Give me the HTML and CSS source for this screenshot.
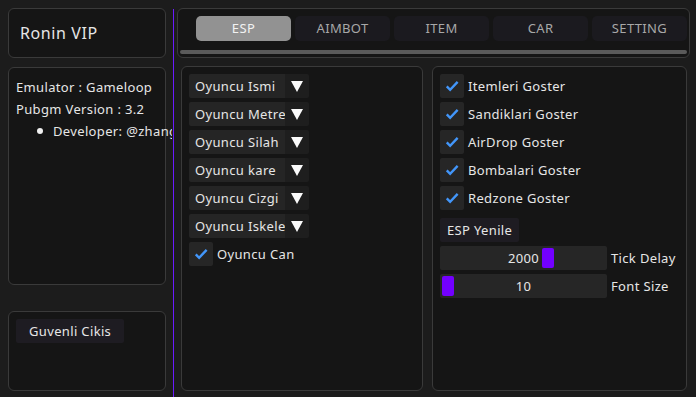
FILE: index.html
```html
<!DOCTYPE html>
<html>
<head>
    <meta charset="UTF-8">
    <title>Ronin VIP</title>
    <link rel="stylesheet" href="styles.css">
</head>
<body>
    <div class="window">
        <!-- Левая колонка -->
        <aside class="sidebar">
            <div class="panel title-panel">Ronin VIP</div>
            <div class="panel info-panel">
                <p>Emulator : Gameloop</p>
                <p>Pubgm Version : 3.2</p>
                <p class="bullet"><span class="dot"></span>Developer: @zhangyuxuan</p>
            </div>
            <div class="panel exit-panel">
                <span class="btn">Guvenli Cikis</span>
            </div>
        </aside>

        <div class="divider"></div>

        <main class="content">
            <div class="panel tabs-panel">
                <div class="tabs">
                    <span class="tab active">ESP</span>
                    <span class="tab">AIMBOT</span>
                    <span class="tab">ITEM</span>
                    <span class="tab">CAR</span>
                    <span class="tab">SETTING</span>
                </div>
                <div class="tab-bar"></div>
            </div>

            <div class="columns">
                <div class="panel col-left">
                    <div class="combo"><span class="combo-label">Oyuncu Ismi</span><span class="combo-arrow"></span></div>
                    <div class="combo"><span class="combo-label">Oyuncu Metre</span><span class="combo-arrow"></span></div>
                    <div class="combo"><span class="combo-label">Oyuncu Silah</span><span class="combo-arrow"></span></div>
                    <div class="combo"><span class="combo-label">Oyuncu kare</span><span class="combo-arrow"></span></div>
                    <div class="combo"><span class="combo-label">Oyuncu Cizgi</span><span class="combo-arrow"></span></div>
                    <div class="combo"><span class="combo-label">Oyuncu Iskelet</span><span class="combo-arrow"></span></div>
                    <label class="check"><span class="box"><svg viewBox="0 0 24 24"><path d="M5 12.5l4.5 4.5L19.5 6.5"/></svg></span>Oyuncu Can</label>
                </div>

                <div class="panel col-right">
                    <label class="check"><span class="box"><svg viewBox="0 0 24 24"><path d="M5 12.5l4.5 4.5L19.5 6.5"/></svg></span>Itemleri Goster</label>
                    <label class="check"><span class="box"><svg viewBox="0 0 24 24"><path d="M5 12.5l4.5 4.5L19.5 6.5"/></svg></span>Sandiklari Goster</label>
                    <label class="check"><span class="box"><svg viewBox="0 0 24 24"><path d="M5 12.5l4.5 4.5L19.5 6.5"/></svg></span>AirDrop Goster</label>
                    <label class="check"><span class="box"><svg viewBox="0 0 24 24"><path d="M5 12.5l4.5 4.5L19.5 6.5"/></svg></span>Bombalari Goster</label>
                    <label class="check"><span class="box"><svg viewBox="0 0 24 24"><path d="M5 12.5l4.5 4.5L19.5 6.5"/></svg></span>Redzone Goster</label>
                    <div class="row-gap"><span class="btn">ESP Yenile</span></div>
                    <div class="slider-row">
                        <div class="slider"><span class="grab" style="left: 102px"></span><span class="value">2000</span></div>
                        <span>Tick Delay</span>
                    </div>
                    <div class="slider-row">
                        <div class="slider"><span class="grab" style="left: 2px"></span><span class="value">10</span></div>
                        <span>Font Size</span>
                    </div>
                </div>
            </div>
        </main>
    </div>
</body>
</html>
```

FILE: styles.css
```css
body {
    margin: 0;
    background-color: #1c1c1c;
    color: #e6e6e6;
    font-family: "Noto Sans", sans-serif;
    font-size: 13px;
    letter-spacing: 0.35px;
    overflow: hidden;
}

.window {
    display: flex;
    height: 397px;
    box-sizing: border-box;
    padding: 8px 6px 6px 8px;
}

.panel { /* Общий стиль панелей */
    background-color: #151515;
    border: 1px solid #3a3a3a;
    border-radius: 6px;
    box-sizing: border-box;
}

.sidebar {
    width: 158px;
    display: flex;
    flex-direction: column;
}

.title-panel {
    height: 50px;
    font-size: 16px;
    letter-spacing: 0.6px;
    padding: 0 0 0 11px;
    display: flex;
    align-items: center;
}

.info-panel {
    height: 219px;
    margin-top: 9px;
    padding: 11px 0 0 7px;
    white-space: nowrap;
}

.info-panel p {
    margin: 0 0 6px;
    line-height: 16px;
}

.bullet { /* Строка с точкой, обрезается у разделителя */
    display: flex;
    align-items: center;
    width: 156px;
    overflow: hidden;
}

.dot {
    flex-shrink: 0;
    width: 6px;
    height: 6px;
    border-radius: 50%;
    background: #f0f0f0;
    margin: 0 10px 0 21px;
}

.exit-panel {
    height: 80px;
    margin-top: 26px;
    padding: 7px 0 0 7px;
}

.btn { /* Кнопки */
    display: inline-block;
    background-color: #1e1c22;
    padding: 0 7px;
    height: 24px;
    line-height: 24px;
    border-radius: 2px;
}

.exit-panel .btn {
    padding: 0 13px;
}

.divider {
    width: 1px;
    background-color: #6a1aff;
    margin: 1px 3px -6px 7px;
}

.content {
    flex: 1;
    display: flex;
    flex-direction: column;
}

.tabs-panel {
    height: 50px;
    padding: 7px 2px 0 2px;
}

.tabs {
    display: flex;
    gap: 4px;
    padding-left: 16px;
}

.tab {
    width: 95px;
    height: 25px;
    line-height: 25px;
    text-align: center;
    background-color: #1b1a1f;
    color: #a8a8a8;
    border-radius: 5px;
}

.tab.active {
    background-color: #929292;
    color: #f2f2f2;
}

.tab-bar {
    height: 4px;
    background-color: #5a5a5a;
    border-radius: 2px;
    margin-top: 9px;
}

.columns {
    flex: 1;
    display: flex;
    gap: 9px;
    margin: 8px 3px 0 4px;
}

.col-left {
    width: 242px;
    padding: 7px 0 0 7px;
}

.col-right {
    flex: 1;
    padding: 7px 0 0 7px;
}

.combo {
    display: flex;
    height: 24px;
    margin-bottom: 4px;
    width: 120px;
}

.combo-label {
    width: 96px;
    background-color: #252525;
    padding-left: 6px;
    box-sizing: border-box;
    line-height: 24px;
    overflow: hidden;
    white-space: nowrap;
    border-radius: 2px 0 0 2px;
}

.combo-arrow { /* Стрелка выпадающего списка */
    width: 24px;
    background-color: #1e1e1e;
    position: relative;
    border-radius: 0 2px 2px 0;
}

.combo-arrow::after {
    content: "";
    position: absolute;
    left: 6px;
    top: 7px;
    border-left: 6px solid transparent;
    border-right: 6px solid transparent;
    border-top: 11px solid #fafafa;
}

.check {
    display: flex;
    align-items: center;
    height: 24px;
    margin-bottom: 4px;
}

.box {
    width: 24px;
    height: 24px;
    background-color: #262626;
    border-radius: 2px;
    margin-right: 4px;
    display: flex;
    align-items: center;
    justify-content: center;
}

.box svg {
    width: 18px;
    height: 18px;
    fill: none;
    stroke: #4296fa;
    stroke-width: 3.2;
}

.row-gap {
    display: flex;
    margin-top: 8px;
    margin-bottom: 4px;
}

.slider-row {
    display: flex;
    align-items: center;
    height: 24px;
    margin-bottom: 4px;
}

.slider {
    position: relative;
    width: 167px;
    height: 24px;
    background-color: #262626;
    border-radius: 2px;
    margin-right: 4px;
    text-align: center;
    line-height: 24px;
}

.grab { /* Ползунок */
    position: absolute;
    top: 2px;
    width: 12px;
    height: 20px;
    background-color: #7300ff;
    border-radius: 2px;
}

.value {
    position: relative;
}
```
